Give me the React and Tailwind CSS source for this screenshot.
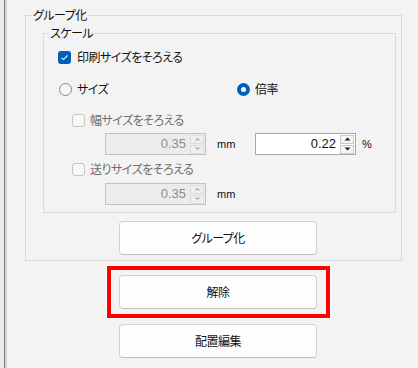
import React from 'react'

const font = { fontFamily: '"Noto Sans CJK JP", "Noto Sans", sans-serif' }

const Check = ({ checked }) =>
  checked ? (
    <span className="flex h-[13px] w-[13px] shrink-0 items-center justify-center rounded-[3px] bg-[#005fb8]">
      <svg width="9" height="9" viewBox="0 0 9 9">
        <path d="M1.5 4.8 L3.5 6.6 L7.5 2.4" fill="none" stroke="#fff" strokeWidth="1.1" />
      </svg>
    </span>
  ) : (
    <span className="h-[13px] w-[13px] shrink-0 rounded-[3px] border border-[#c6c6c6] bg-[#f8f8f8]" />
  )

const Radio = ({ checked }) =>
  checked ? (
    <span className="flex h-[13px] w-[13px] shrink-0 items-center justify-center rounded-full bg-[#005fb8]">
      <span className="h-[5px] w-[5px] rounded-full bg-white" />
    </span>
  ) : (
    <span className="h-[13px] w-[13px] shrink-0 rounded-full border border-[#858585] bg-[#f6f6f6]" />
  )

const Spin = ({ value, disabled }) => (
  <div
    className={`flex h-[22px] w-[101px] items-center border ${
      disabled ? 'border-[#c2c2c2] bg-[#ececec] text-[#8c8c8c]' : 'border-[#a9a9ad] bg-white text-[#111]'
    }`}
  >
    <span className="flex-1 pr-[4px] text-right text-[13px] leading-[20px] tracking-normal" style={{ fontFamily: '"Liberation Sans", sans-serif' }}>
      {value}
    </span>
    <div className="mr-[1px] flex h-[20px] w-[14px] flex-col justify-center gap-[1px]">
      {['up', 'down'].map((d) => (
        <div
          key={d}
          className={`flex h-[9px] items-center justify-center border ${
            disabled ? 'border-[#dcdcdc] bg-[#efefef]' : 'border-[#c9c9c9] bg-[#f6f6f6]'
          }`}
        >
          <svg width="7" height="4" viewBox="0 0 7 4">
            <path
              d={d === 'up' ? 'M0.5 3.5 L3.5 0.5 L6.5 3.5 Z' : 'M0.5 0.5 L3.5 3.5 L6.5 0.5 Z'}
              fill={disabled ? '#b9b9b9' : '#222'}
            />
          </svg>
        </div>
      ))}
    </div>
  </div>
)

const Button = ({ children, className = '' }) => (
  <button
    className={`flex h-[34px] w-[198px] items-center justify-center rounded-[4px] border border-[#d2d2d2] border-b-[#bfbfbf] bg-[#fdfdfd] text-[12px] text-[#111] ${className}`}
  >
    {children}
  </button>
)

export default function App() {
  return (
    <div
      className="flex h-[368px] w-[418px] overflow-hidden bg-[#f3f3f3] text-[12px] tracking-[-0.5px] text-[#111] [font-feature-settings:'palt']"
      style={font}
    >
      {/* left splitter */}
      <div className="w-[4px] bg-[#ebebeb]" />
      <div className="w-[1px] bg-[#7c7c7c]" />
      <div className="w-[2px] bg-[#d2d2d2]" />

      <div className="flex flex-col">
        <fieldset className="ml-[18px] mt-[7px] w-[377px] border border-[#d9d9d9] pb-[5px]">
          <legend className="ml-[6px] px-[1px] leading-[16px]">グループ化</legend>

          <fieldset className="ml-[17px] mt-[2px] w-[353px] border border-[#d9d9d9] px-[14px] pb-[7px] pt-[8px]">
            <legend className="ml-[-9px] px-[1px] leading-[16px]">スケール</legend>

            <div className="flex h-[16px] items-center gap-[6px]">
              <Check checked />
              <span>印刷サイズをそろえる</span>
            </div>

            <div className="mt-[16px] flex h-[16px] items-center">
              <div className="flex w-[179px] items-center gap-[5px] pl-[1px]">
                <Radio />
                <span>サイズ</span>
              </div>
              <div className="flex items-center gap-[5px]">
                <Radio checked />
                <span>倍率</span>
              </div>
            </div>

            <div className="mt-[15px] flex h-[16px] items-center gap-[5px] pl-[14px] text-[#6e6e6e]">
              <Check />
              <span>幅サイズをそろえる</span>
            </div>

            <div className="mt-[5px] flex h-[22px] items-center pl-[47px]">
              <Spin value="0.35" disabled />
              <span className="ml-[11px] w-[38px] text-[11px] tracking-normal" style={{ fontFamily: '"Liberation Sans", sans-serif' }}>
                mm
              </span>
              <Spin value="0.22" />
              <span className="ml-[6px] text-[11px] tracking-normal" style={{ fontFamily: '"Liberation Sans", sans-serif' }}>
                %
              </span>
            </div>

            <div className="mt-[6px] flex h-[16px] items-center gap-[5px] pl-[14px] text-[#6e6e6e]">
              <Check />
              <span>送りサイズをそろえる</span>
            </div>

            <div className="mt-[6px] flex h-[22px] items-center pl-[47px]">
              <Spin value="0.35" disabled />
              <span className="ml-[11px] text-[11px] tracking-normal" style={{ fontFamily: '"Liberation Sans", sans-serif' }}>
                mm
              </span>
            </div>
          </fieldset>

          <Button className="ml-[93px] mt-[8px]">グループ化</Button>
        </fieldset>

        <div className="ml-[100px] mt-[5px] h-[52px] w-[223px] border-[4px] border-[#ff0000] pl-[8px] pt-[5px] shadow-[0_0_0_1px_#ffffff]">
          <Button>解除</Button>
        </div>

        <Button className="ml-[112px] mt-[6px]">配置編集</Button>
      </div>
    </div>
  )
}
